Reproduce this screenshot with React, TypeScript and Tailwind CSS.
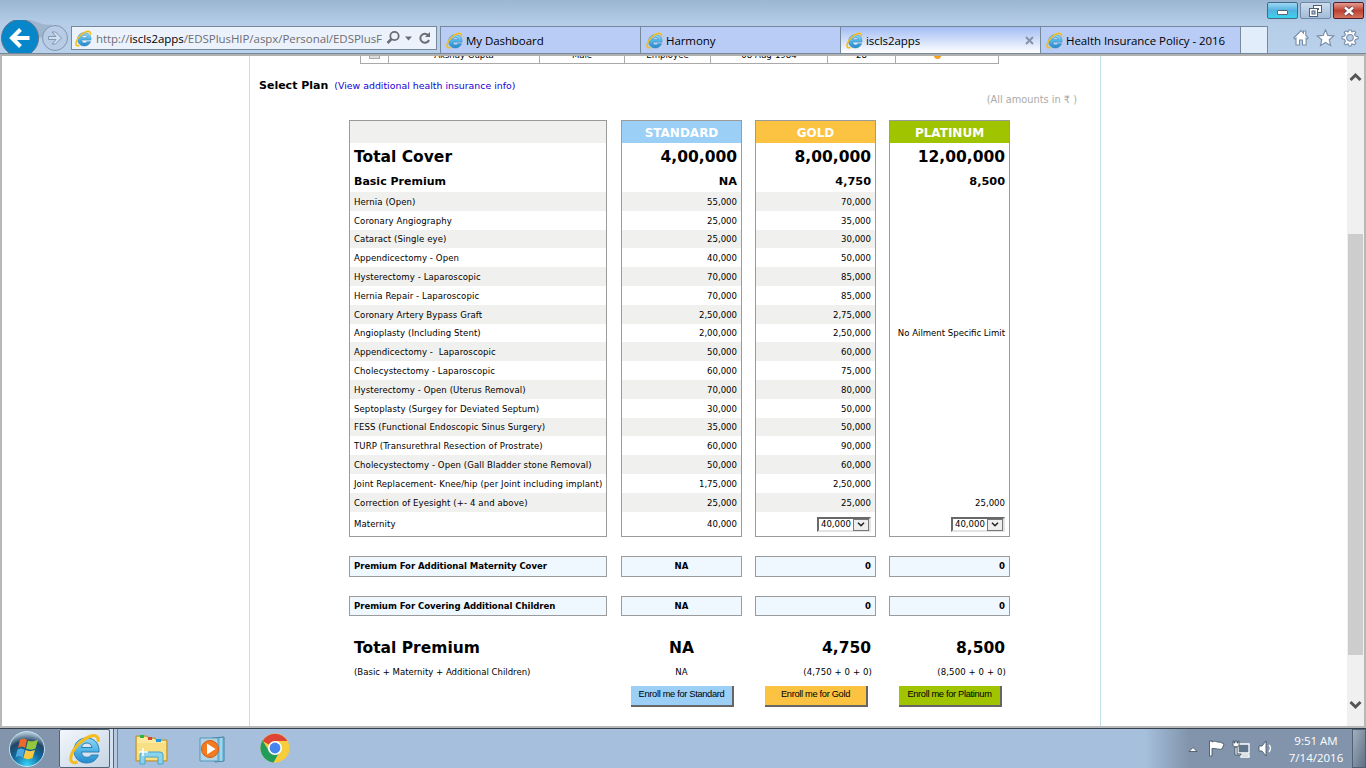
import React from "react";

const small = "font-['DejaVu_Sans_Condensed','DejaVu_Sans',sans-serif] text-[9.5px]";
const bold = "font-['DejaVu_Sans',sans-serif] font-bold";
const ui = "font-['Open_Sans',sans-serif]";

const procedures: [string, string, string][] = [
  ["Hernia (Open)", "55,000", "70,000"],
  ["Coronary Angiography", "25,000", "35,000"],
  ["Cataract (Single eye)", "25,000", "30,000"],
  ["Appendicectomy - Open", "40,000", "50,000"],
  ["Hysterectomy - Laparoscopic", "70,000", "85,000"],
  ["Hernia Repair - Laparoscopic", "70,000", "85,000"],
  ["Coronary Artery Bypass Graft", "2,50,000", "2,75,000"],
  ["Angioplasty (Including Stent)", "2,00,000", "2,50,000"],
  ["Appendicectomy -  Laparoscopic", "50,000", "60,000"],
  ["Cholecystectomy - Laparoscopic", "60,000", "75,000"],
  ["Hysterectomy - Open (Uterus Removal)", "70,000", "80,000"],
  ["Septoplasty (Surgey for Deviated Septum)", "30,000", "50,000"],
  ["FESS (Functional Endoscopic Sinus Surgery)", "35,000", "50,000"],
  ["TURP (Transurethral Resection of Prostrate)", "60,000", "90,000"],
  ["Cholecystectomy - Open (Gall Bladder stone Removal)", "50,000", "60,000"],
  ["Joint Replacement- Knee/hip (per Joint including implant)", "1,75,000", "2,50,000"],
  ["Correction of Eyesight (+- 4 and above)", "25,000", "25,000"],
];

function IEIcon({ className, id }: { className: string; id: string }) {
  return (
    <svg className={className} viewBox="0 0 32 32" fill="none">
      <defs>
        <linearGradient id={id} x1="0" y1="0" x2="0" y2="1">
          <stop offset="0" stopColor="#8fd8f5" />
          <stop offset=".5" stopColor="#4fb4e6" />
          <stop offset="1" stopColor="#2389ca" />
        </linearGradient>
      </defs>
      <path
        d="M30 19H12.5c.3 3.4 2.2 5.3 5.2 5.3 2.2 0 3.7-.8 4.6-2.3h7c-1.7 5-6 8-11.8 8C10 30 5 25 5 17.5S10.3 5 17.5 5C25.5 5 30.5 10.5 30 19zM23 14.5c-.5-2.9-2.400-4.500-5.200-4.500s-4.700 1.600-5.200 4.500z"
        fill={`url(#${id})`}
        stroke="#2b7fb8"
        strokeWidth="1"
      />
      <path d="M29 9C30 4 27 1.5 22 3 14 5.5 5 14 2.5 22c-2 6 .5 9 6 7" stroke="#f5bd1c" strokeWidth="3" />
    </svg>
  );
}

function Tab({ title, active, id }: { title: string; active?: boolean; id: string }) {
  return (
    <div
      className={`flex h-[27px] w-[200px] items-center border-l border-t border-[#76889c] pl-[5px] ${
        active ? "bg-linear-to-b from-[#a3bcf3] to-white" : "bg-[#b9ccf6]"
      }`}
    >
      <IEIcon className="size-[17px] shrink-0" id={id} />
      <span className={`${ui} ml-[3px] whitespace-nowrap pt-px text-[11.5px] leading-[18px] tracking-[-0.07px] text-black`}>{title}</span>
      {active && (
        <svg className="ml-auto mr-[6px] size-[9px]" viewBox="0 0 9 9">
          <path d="M1 1l7 7M8 1L1 8" stroke="#8792a8" strokeWidth="2" />
        </svg>
      )}
    </div>
  );
}

function Browser() {
  return (
    <header className="flex h-[54px] shrink-0 flex-col border-b border-[#76889c] bg-linear-to-b from-[#9bb6d2] via-[#b5cde7] via-45% to-[#bad1ec]">
      <div className="flex h-5 shrink-0 justify-end gap-[2px] pr-[2px] pt-[2px]">
        <div className="flex h-[17px] w-[31px] items-center justify-center rounded-[2px] border border-[#456984] bg-linear-to-b from-[#9bd7f3] via-[#52b2df] via-50% to-[#35d4ef]">
          <div className="mt-[4px] h-[5px] w-[11px] rounded-[1px] border border-[#55666f] bg-white" />
        </div>
        <div className="flex h-[17px] w-[31px] items-center justify-center rounded-[2px] border border-[#7189a5] bg-linear-to-b from-[#cbdced] to-[#a2bbd7]">
          <svg width="13" height="12" viewBox="0 0 13 12">
            <rect x="4.500" y=".5" width="8" height="7" fill="#fff" stroke="#4f6076" />
            <rect x="7.500" y="3" width="2.500" height="2" fill="#56677c" />
            <rect x=".5" y="3.500" width="8" height="8" fill="#fff" stroke="#4f6076" />
            <rect x="3" y="6" width="3" height="3" fill="#b5c9df" stroke="#4f6076" />
          </svg>
        </div>
        <div className="flex h-[17px] w-[31px] items-center justify-center rounded-[2px] border border-[#541d2b] bg-linear-to-b from-[#e59b91] via-[#bd4031] via-50% to-[#d3735d]">
          <svg width="12" height="10" viewBox="0 0 12 10">
            <path d="M2 1.5l8 7M10 1.5l-8 7" stroke="#694955" strokeWidth="4.500" />
            <path d="M2 1.5l8 7M10 1.5l-8 7" stroke="#fff" strokeWidth="2.400" />
          </svg>
        </div>
      </div>
      <div className="flex h-[33px]">
        <svg className="h-[33px] w-[71px] shrink-0" viewBox="0 20 71 33">
          <path d="M20 19c17 0 20 7 32 5.500l-8 12-6 2z" fill="#9fb5cd" />
          <circle cx="20" cy="38" r="18.500" fill="#0787ca" stroke="#5c7389" />
          <path d="M29.5 38H13M20.5 29.5L12 38l8.5 8.5" stroke="white" strokeWidth="4" fill="none" />
          <circle cx="55" cy="38" r="12.500" fill="#b8cde5" stroke="#8196af" />
          <path d="M48.500 36.500h7.500l-4-4.500h3.500l6 6-6 6H52l4-4.500h-7.500z" fill="#d0dff0" stroke="#8297b0" />
        </svg>
        <div className="mt-[6px] flex h-6 w-[366px] shrink-0 items-center border border-[#76889c] bg-[#ecf2fc] pl-[3px]">
          <IEIcon className="size-[17px] shrink-0" id="ieAddress" />
          <span className={`${ui} ml-[4px] w-[287px] shrink-0 whitespace-nowrap pt-px text-[11.5px] tracking-[-0.05px] text-[#6c6e72]`}>
            http://<span className="text-black">iscls2apps</span>/EDSPlusHIP/aspx/Personal/EDSPlusF
          </span>
          <svg className="ml-[3px] h-4 w-[46px] shrink-0" viewBox="0 0 46 16" fill="none" stroke="#686c73">
            <circle cx="8.500" cy="6" r="4.200" strokeWidth="1.800" />
            <path d="M5.500 9L1.500 13" strokeWidth="2.500" />
            <path d="M19 6.5h7l-3.500 4z" fill="#686c73" stroke="none" />
            <path d="M42 5a4.500 4.500 0 1 0 1 5" strokeWidth="2" />
            <path d="M44 2v5h-5z" fill="#686c73" stroke="none" />
          </svg>
        </div>
        <div className="ml-[3px] mt-[6px] flex">
          <Tab title="My Dashboard" id="ieTab1" />
          <Tab title="Harmony" id="ieTab2" />
          <Tab title="iscls2apps" id="ieTab3" active />
          <Tab title="Health Insurance Policy - 2016" id="ieTab4" />
          <div className="h-[27px] w-[28px] border-x border-t border-[#76889c] bg-[#e1edfa]" />
        </div>
        <svg className="ml-[25px] mt-[9px] h-[18px] w-[68px]" viewBox="0 0 68 18" fill="#fff" stroke="#788da7" strokeWidth="1.100">
          <path d="M.8 9L8 1.5l2.5 2.6V2h2.3v4.2L15.2 9l-1.1 1.1-1-.9V16H9.5v-5h-3v5H3V9.2l-1 .9z" />
          <path d="M32.5.8l2.300 5.600 6 .5-4.600 3.900 1.500 5.800-5.200-3.100-5.100 3.100 1.400-5.800-4.600-3.900 6-.5z" />
          <path fillRule="evenodd" d="M55 3l1-2h2l1 2 2.300-1.200 1.500 1.500L61.500 5.500l1 1.500 2.500.7v2.100l-2.500.7-.8 1.700 1.100 2.200-1.500 1.500L59 14.700 58 17h-2l-1-2.300-2.300 1.200-1.500-1.500 1.200-2.200-.8-1.700-2.500-.7V7.700l2.500-.7.8-1.500-1.200-2.200 1.500-1.500zM57 5.500a3.300 3.300 0 1 0 0 6.600 3.300 3.300 0 0 0 0-6.600z" />
        </svg>
      </div>
    </header>
  );
}

function Dropdown() {
  return (
    <div className="flex h-[15px] w-[54px] items-center border-2 border-b-[#e3e3e3] border-l-[#696969] border-r-[#e3e3e3] border-t-[#696969] bg-white pl-[2px]">
      <span className="w-[32px] text-left">40,000</span>
      <span className="flex h-[12px] w-[16px] shrink-0 items-center justify-center border border-[#777] bg-[#eee]">
        <svg width="8" height="5" viewBox="0 0 8 5">
          <path d="M1 .8l3 3 3-3" stroke="#222" strokeWidth="1.500" fill="none" />
        </svg>
      </span>
    </div>
  );
}

const plans = [
  { name: "STANDARD", short: "Standard", cover: "4,00,000", premium: "NA", color: "bg-[#9bcff5]", idx: 1, extra: "NA", detail: "NA" },
  { name: "GOLD", short: "Gold", cover: "8,00,000", premium: "4,750", color: "bg-[#fcc242]", idx: 2, extra: "0", detail: "(4,750 + 0 + 0)" },
  { name: "PLATINUM", short: "Platinum", cover: "12,00,000", premium: "8,500", color: "bg-[#a1c400]", idx: 3, extra: "0", detail: "(8,500 + 0 + 0)" },
];

function PlanTable() {
  return (
    <div className="ml-[97px] flex gap-[13px]">
      <section className={`mr-px w-[258px] shrink-0 ${small}`}>
        <div className="h-[417px] border border-[#9b9b9b]">
          <div className="h-[22px] bg-[#f0f0ee]" />
          <div className={`flex h-[28px] items-center pl-[4px] pt-[2px] text-[15.5px] ${bold}`}>Total Cover</div>
          <div className={`flex h-[21px] items-center pl-[4px] pt-[2px] text-[11px] ${bold}`}>Basic Premium</div>
          {procedures.map((p, i) => (
            <div key={p[0]} className={`flex h-[18.8px] items-center whitespace-pre pl-[4px] pt-px tracking-[0.09px] ${i % 2 ? "" : "bg-[#f0f0ee]"}`}>
              {p[0]}
            </div>
          ))}
          <div className="flex h-[24px] items-center pl-[4px] pt-[2px] tracking-[0.09px]">Maternity</div>
        </div>
        <div className="mt-[19px] flex h-[21px] items-center border border-[#9b9b9b] bg-[#eff7ff] pl-[4px] font-bold tracking-[-0.05px]">Premium For Additional Maternity Cover</div>
        <div className="mt-[19px] flex h-[20px] items-center border border-[#9b9b9b] bg-[#eff7ff] pl-[4px] font-bold tracking-[-0.05px]">Premium For Covering Additional Children</div>
        <div className={`mt-[21px] flex h-6 items-center pl-[5px] text-[15.5px] ${bold}`}>Total Premium</div>
        <div className="flex h-[22px] items-center pl-[5px]">(Basic + Maternity + Additional Children)</div>
      </section>
      {plans.map((plan) => {
        const place = plan.idx === 1 ? "justify-center" : "justify-end";
        return (
          <section key={plan.name} className={`w-[121px] shrink-0 text-right ${small}`}>
            <div className="h-[417px] border border-[#9b9b9b]">
              <div className={`flex h-[22px] items-center justify-center pt-[2px] text-[12px] text-white ${bold} ${plan.color}`}>{plan.name}</div>
              <div className={`flex h-[28px] items-center justify-end pr-[4px] pt-[2px] text-[15.5px] ${bold}`}>{plan.cover}</div>
              <div className={`flex h-[21px] items-center justify-end pr-[4px] pt-[2px] text-[11.3px] ${bold}`}>{plan.premium}</div>
              {procedures.map((p, i) => (
                <div
                  key={p[0]}
                  className={`flex h-[18.8px] items-center justify-end whitespace-nowrap pr-[4px] pt-px ${i % 2 || plan.idx === 3 ? "" : "bg-[#f0f0ee]"}`}
                >
                  {plan.idx < 3 ? p[plan.idx] : i === 7 ? "No Ailment Specific Limit" : i === 16 ? "25,000" : ""}
                </div>
              ))}
              <div className="flex h-[24px] items-center justify-end pr-[4px] pt-[2px]">{plan.idx === 1 ? "40,000" : <Dropdown />}</div>
            </div>
            <div className={`mt-[19px] flex h-[21px] items-center border border-[#9b9b9b] bg-[#eff7ff] px-[4px] font-bold ${place}`}>{plan.extra}</div>
            <div className={`mt-[19px] flex h-[20px] items-center border border-[#9b9b9b] bg-[#eff7ff] px-[4px] font-bold ${place}`}>{plan.extra}</div>
            <div className={`mt-[21px] flex h-6 items-center px-[5px] text-[15.5px] ${bold} ${place}`}>{plan.premium}</div>
            <div className={`flex h-[22px] items-center px-[4px] tracking-[0.1px] ${place}`}>{plan.detail}</div>
            <button
              className={`ml-[10px] mt-[3px] flex h-[21px] w-[103px] items-center justify-center whitespace-nowrap border-b-2 border-r-2 border-[#666] pb-px font-['Liberation_Sans',sans-serif] text-[9.3px] tracking-[-0.33px] ${plan.color}`}
            >
              Enroll me for {plan.short}
            </button>
          </section>
        );
      })}
    </div>
  );
}

function MemberStrip() {
  const cells: [string, string][] = [
    ["", "w-[28px]"],
    ["Akshay Gupta", "w-[151px]"],
    ["Male", "w-[85px]"],
    ["Employee", "w-[86px]"],
    ["08-Aug-1984", "w-[117px]"],
    ["28", "w-[68px]"],
  ];
  return (
    <div className={`ml-[110px] flex h-[8px] w-[639px] shrink-0 items-end overflow-hidden border-x border-b border-[#aaa] ${small}`}>
      {cells.map(([text, width], i) => (
        <div key={i} className={`flex h-5 shrink-0 items-center justify-center border-r border-[#aaa] leading-none ${width}`}>
          {i === 0 ? <span className="size-[11px] border border-[#aaa] bg-[#ddd]" /> : <span className="mt-[3px]">{text}</span>}
        </div>
      ))}
      <div className="mb-[4px] ml-[38px] h-[4px] w-[7px] rounded-b-full bg-[#f5a11c]" />
    </div>
  );
}

function Scrollbar() {
  return (
    <div className="flex w-[17px] shrink-0 flex-col items-center bg-[#f0f0f0]">
      <svg className="mt-[15px] h-[12px] w-[13px] shrink-0" viewBox="0 0 13 12">
        <path d="M1.5 9L6.5 4l5 5" stroke="#555" strokeWidth="3" fill="none" />
      </svg>
      <div className="mt-[151px] h-[421px] w-[15px] shrink-0 bg-[#cdcdcd]" />
      <svg className="mt-[44px] h-[12px] w-[13px] shrink-0" viewBox="0 0 13 12">
        <path d="M1.5 3l5 5 5-5" stroke="#555" strokeWidth="3" fill="none" />
      </svg>
    </div>
  );
}

function Taskbar() {
  return (
    <footer className="flex h-[40px] shrink-0 border-t border-[#35404d] bg-[#a6bfdc]">
      <div className="flex w-[59px] items-center bg-[#8295ad] pl-[8px]">
        <svg width="38" height="38" viewBox="0 0 38 38">
          <defs>
            <radialGradient id="orb" cx=".5" cy=".95" r=".9">
              <stop offset="0" stopColor="#35d4f5" />
              <stop offset=".45" stopColor="#12699e" />
              <stop offset=".75" stopColor="#214665" />
              <stop offset="1" stopColor="#a9bfd0" />
            </radialGradient>
          </defs>
          <circle cx="19" cy="19" r="17.500" fill="url(#orb)" stroke="#c1e4f2" />
          <path d="M12 10c3-2 5-1 7 0l-2 8c-3-2-5-1-7 0z" fill="#ee682b" />
          <path d="M20 10.5c3 1.5 6 1 10-1l-2.500 9c-3 1.500-6 1.500-9.500 0z" fill="#92c73e" />
          <path d="M9.500 19.500c3-1.500 5-1 7 .5l-2 7.500c-3-2-5-1-7 0z" fill="#4ba9e0" />
          <path d="M17.500 20c3 1.500 6 1.500 9.500 0l-2.500 8c-3 1.500-6 1.500-9 0z" fill="#fbc93f" />
        </svg>
      </div>
      <div className="flex h-[39px] w-[51px] items-center justify-center rounded-[2px] border border-[#52647a] bg-linear-to-br from-[#f3f7fb] to-[#c6d4e4]">
        <IEIcon className="size-[32px]" id="ieTaskbar" />
      </div>
      <div className="h-[39px] w-[4px] border-r border-[#52647a] bg-[#d4e0ed]" />
      <div className="h-[39px] w-[4px] border-r border-[#6c8098] bg-[#b5c8de]" />
      <svg className="ml-[17px] mt-[5px] h-[31px] w-[35px]" viewBox="0 0 35 31">
        <path d="M1 4V2h11l1 2h7l1 2h11v21H1z" fill="#e9c861" stroke="#b98e35" />
        <path d="M2 3h10l1 2h7l1 2h10v19H2z" fill="#ffe99d" />
        <path d="M2 9h29v17H2z" fill="#f9df83" />
        <path d="M5 1h4v3H5z" fill="#27b83d" />
        <path d="M13 3h4v3h-4z" fill="#d9432b" />
        <path d="M21 5h5v3h-5z" fill="#1d99db" />
        <path d="M5 30v-9q0-3 3-3h17q3 0 3 3v9h-5v-7H10v7z" fill="#8bd3ed" stroke="#4aa2c5" />
        <path d="M8 14v8M4 18h9" stroke="#fff" strokeWidth="1.500" />
      </svg>
      <svg className="ml-[28px] mt-[7px] h-[28px] w-[31px]" viewBox="0 0 31 28">
        <path d="M14 2l12-1v24l-9 1z" fill="#7bc2e2" stroke="#467fa1" />
        <path d="M23 2v23" stroke="#c7eaf7" />
        <path d="M2 2h18v23H2z" fill="#b4d4e5" stroke="#5298ba" />
        <circle cx="12" cy="13" r="8.500" fill="#f47b20" stroke="#d85a0e" />
        <path d="M9 7.5v11l8.500-5.500z" fill="#fff" />
      </svg>
      <svg className="ml-[31px] mt-[4px] size-[30px]" viewBox="0 0 30 30">
        <circle cx="15" cy="15" r="14.500" fill="#f7cd3c" />
        <path d="M15 15L2.500 8A14.500 14.500 0 0 1 27.500 8H15z" fill="#df4536" />
        <path d="M2.500 7.500a14.500 14.500 0 0 0 11 21.900L20 18l-5 3-6-3z" fill="#219c59" />
        <circle cx="15" cy="15" r="7" fill="#fff" />
        <circle cx="15" cy="15" r="5.400" fill="#4384ee" />
      </svg>
      <div className="ml-auto flex w-[221px] bg-linear-to-r from-[#a6bfdc] to-[#8194ab] to-20%">
        <svg className="ml-[43px] mt-[9px] h-[24px] w-[88px]" viewBox="0 0 88 24" fill="white" stroke="#3d4b5c" strokeWidth=".8">
          <path d="M1 13.500l4-4 4 4z" />
          <path d="M21.500 3h2.500v1c4-2 5 1 8 0l4 2-2 5c-3 1-6-1-10-.5V18h-2.500z" />
          <path d="M50 6h11v9H50zM53 17h8v2h-8z" fill="#61768d" stroke="#fff" strokeWidth="1.300" />
          <path d="M45 3v4q0 2 3 2t3-2V3h-1v2h-1V3h-2v2h-1V3zM47 9h2v7h4v1h-6z" />
          <path d="M71 8h3l4-5v15l-4-5h-3z" />
          <path d="M81 7q3 3 0 7" fill="none" stroke="#fff" strokeWidth="1.300" />
        </svg>
        <div className={`${ui} ml-[7px] mt-[3px] w-[66px] text-center text-[11.5px] leading-[17px] text-white`}>
          <div>9:51 AM</div>
          <div>7/14/2016</div>
        </div>
        <div className="ml-auto h-[39px] w-[14px] border border-[#506175] bg-linear-to-br from-[#a3afbd] to-[#5f7186]" />
      </div>
    </footer>
  );
}

export default function App() {
  return (
    <div className="flex h-[768px] w-[1366px] flex-col overflow-hidden bg-white text-black">
      <Browser />
      <main className="flex h-[674px] shrink-0 border-2 border-[#b8b8b8] border-t-[#b0b0b0]">
        <div className="flex flex-1 pl-[247px]">
          <div className="flex h-full w-[852px] shrink-0 flex-col border-x border-[#c0dfe9]">
            <MemberStrip />
            <div className="ml-[9px] mt-[13px] flex h-[18px] items-center">
              <h1 className={`whitespace-nowrap text-[11px] ${bold}`}>Select Plan</h1>
              <a className="ml-[6px] whitespace-nowrap font-['DejaVu_Sans',sans-serif] text-[9.4px] text-[#1700d4]">(View additional health insurance info)</a>
            </div>
            <div className="mr-[23px] -mt-px h-[12px] text-right font-['DejaVu_Sans',sans-serif] text-[9.8px] leading-[12px] text-[#aaa]">(All amounts in ₹ )</div>
            <div className="mt-[14px] pl-[2px]">
              <PlanTable />
            </div>
          </div>
        </div>
        <Scrollbar />
      </main>
      <Taskbar />
    </div>
  );
}
